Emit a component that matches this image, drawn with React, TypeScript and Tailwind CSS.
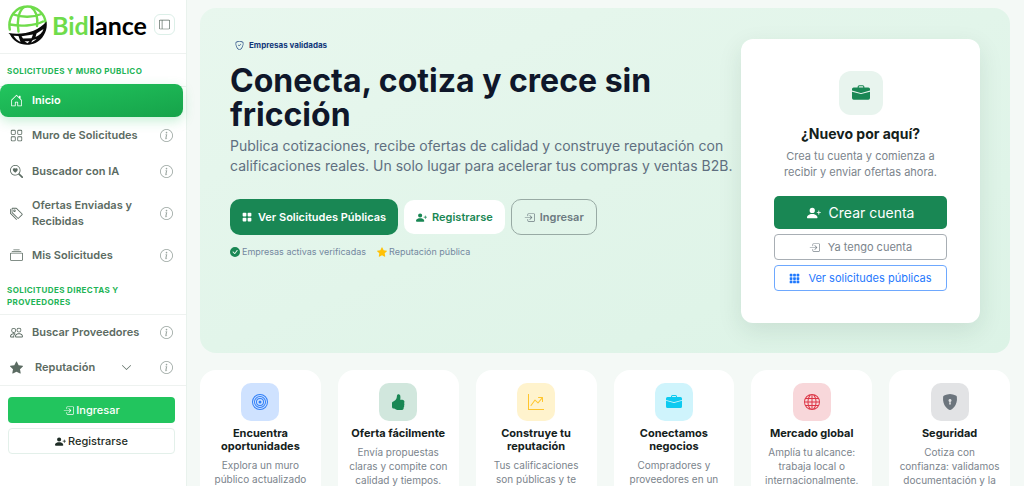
import React from "react";
import type { IconType } from "react-icons";
import {
  BsBoxArrowInRight,
  BsBriefcaseFill,
  BsBullseye,
  BsCheckCircleFill,
  BsChevronDown,
  BsCollection,
  BsGlobe,
  BsGraphUpArrow,
  BsGrid,
  BsGrid3X3GapFill,
  BsGridFill,
  BsHandThumbsUpFill,
  BsHouseDoor,
  BsInfoCircle,
  BsLayoutSidebar,
  BsPeople,
  BsPersonPlusFill,
  BsSearchHeart,
  BsShieldCheck,
  BsShieldLockFill,
  BsStarFill,
  BsTags,
} from "react-icons/bs";

const Logo = () => {
  return (
    <a href="#" className="flex items-center gap-1" aria-label="Bidlance">
      <svg viewBox="0 0 40 40" className="w-10 h-10 shrink-0" fill="none">
        <g stroke="#6fdc4b" strokeWidth="2.4" strokeLinecap="round">
          <path d="M1.8 24.5C-0.5 12 8 1.5 19.5 1.5C29 1.5 36.5 8.5 37.5 17" />
          <path d="M10.5 26.5C8.5 17 10.5 6 16 2" />
          <path d="M23 2C28 5.5 30 13 29 21" />
          <path d="M5.5 9.5C13.5 12.5 25.5 12.5 33.5 9" />
          <path d="M2 19.5C12 21.5 26 21 35 16.5" />
        </g>
        <path
          d="M0.5 28C15 30.5 30 26.5 38.5 16.5C40 25 35.5 34 27.5 38C17 42.5 6 38 2 29.5Z"
          fill="#0a0a0a"
        />
        <g fill="#ffffff">
          <path d="M5.5 30.7C7.5 33.5 9.5 35.5 12.5 37L10.5 31Z" />
          <path d="M13.5 31.2L25 29.5L23.5 33.2L15 33.6Z" />
          <path d="M28.5 28.5L35.5 24C34.5 27.5 31.5 30.5 27.5 32Z" />
          <path d="M16.5 36.2H21.5L19.5 38.2Z" />
          <path d="M28.5 34C26.5 35.7 25 36.8 23 37.5L24.8 35Z" />
        </g>
      </svg>
      <span className="font-[Lato,sans-serif] text-[25px] leading-8 font-bold text-black">
        <span className="text-[#6fdc4b]">Bid</span>lance
      </span>
    </a>
  );
};

const SidebarItem = ({
  icon: Icon,
  label,
  expandable = false,
}: {
  icon: IconType;
  label: string;
  expandable?: boolean;
}) => {
  return (
    <li className="flex items-center gap-2 min-h-8 py-[6px] pl-[10px] pr-[13px]">
      <a
        href="#"
        className="flex flex-1 items-center gap-[9px] text-[11px] leading-4 font-semibold text-[#5b6b62]"
      >
        <Icon className="w-[13px] h-[13px] shrink-0" />
        <span className={expandable ? "flex-1 pl-[3px]" : "flex-1"}>{label}</span>
        {expandable && <BsChevronDown className="w-[11px] h-[11px] mr-5" />}
      </a>
      <button type="button" aria-label={`Información: ${label}`}>
        <BsInfoCircle className="w-[13px] h-[13px] text-[#9aa5a0]" />
      </button>
    </li>
  );
};

const Sidebar = () => {
  return (
    <aside className="w-[187px] shrink-0 bg-white border-r border-[#e9f2ed]">
      <div className="flex items-center justify-between h-[54px] pl-2 pr-[11px] pb-1 border-b border-[#eef2f0]">
        <Logo />
        <button
          type="button"
          aria-label="Contraer menú"
          className="flex items-center justify-center w-[21px] h-[21px] rounded-md border border-[#dcefe8]"
        >
          <BsLayoutSidebar className="w-[11px] h-[11px] text-[#5b6b62]" />
        </button>
      </div>
      <h2 className="px-[7px] pt-[11px] pb-[9px] text-[8px] leading-3 font-bold tracking-wider text-[#22b455] uppercase border-b border-[#eef2f0]">
        Solicitudes y muro publico
      </h2>
      <nav>
        <a
          href="#"
          className="flex items-center gap-[9px] h-[33px] mt-[-3px] mr-[3px] pl-[10px] rounded-lg bg-linear-to-br from-[#22c55e] to-[#16a34a] text-[11px] font-semibold text-white shadow-[0_4px_12px_rgba(34,197,94,0.25)]"
        >
          <BsHouseDoor className="w-[13px] h-[13px]" />
          Inicio
        </a>
        <ul className="pt-[2px] space-y-1">
          <SidebarItem icon={BsGrid} label="Muro de Solicitudes" />
          <SidebarItem icon={BsSearchHeart} label="Buscador con IA" />
          <SidebarItem icon={BsTags} label="Ofertas Enviadas y Recibidas" />
          <SidebarItem icon={BsCollection} label="Mis Solicitudes" />
        </ul>
      </nav>
      <h2 className="px-[7px] pt-[13px] pb-[6px] text-[8px] leading-3 font-bold tracking-wider text-[#22b455] uppercase border-b border-[#eef2f0]">
        Solicitudes directas y proveedores
      </h2>
      <ul className="pt-px pb-[2px] space-y-[3px] border-b border-[#eef2f0]">
        <SidebarItem icon={BsPeople} label="Buscar Proveedores" />
        <SidebarItem icon={BsStarFill} label="Reputación" expandable />
      </ul>
      <div className="flex flex-col gap-[5px] pt-[11px] pl-2 pr-[11px] text-[11px] font-medium">
        <button
          type="button"
          className="flex items-center justify-center gap-[2px] h-[26px] rounded-sm bg-[#22c55e] text-white"
        >
          <BsBoxArrowInRight className="w-[11px] h-[11px]" />
          Ingresar
        </button>
        <button
          type="button"
          className="flex items-center justify-center gap-[2px] h-[26px] rounded-sm border border-[#e3f0ea] text-[#1f2d26]"
        >
          <BsPersonPlusFill className="w-[11px] h-[11px]" />
          Registrarse
        </button>
      </div>
    </aside>
  );
};

const SignupCard = () => {
  return (
    <div className="w-[239px] shrink-0 rounded-xl bg-white px-[33px] pt-8 pb-8 text-center shadow-[0_8px_24px_rgba(20,60,40,0.1)]">
      <div className="flex items-center justify-center w-11 h-11 mx-auto rounded-xl bg-[#e8f4ee]">
        <BsBriefcaseFill className="w-[18px] h-[18px] text-[#198754]" />
      </div>
      <h2 className="mt-[9px] text-[14px] leading-5 font-bold text-[#14211b]">
        ¿Nuevo por aquí?
      </h2>
      <p className="mt-1 text-[11px] leading-4 text-[#7b848c]">
        Crea tu cuenta y comienza a recibir y enviar ofertas ahora.
      </p>
      <div className="flex flex-col gap-[5px] mt-4 text-[11px]">
        <button
          type="button"
          className="flex items-center justify-center gap-2 h-[33px] rounded-[5px] bg-[#198754] text-[14px] text-white"
        >
          <BsPersonPlusFill className="w-[14px] h-[14px]" />
          Crear cuenta
        </button>
        <button
          type="button"
          className="flex items-center justify-center gap-2 h-[26px] rounded-sm border border-[#a8aeb4] text-[#7b848c]"
        >
          <BsBoxArrowInRight className="w-[11px] h-[11px]" />
          Ya tengo cuenta
        </button>
        <button
          type="button"
          className="flex items-center justify-center gap-2 h-[26px] rounded-sm border border-[#6ea8fe] text-[#1f78fd]"
        >
          <BsGrid3X3GapFill className="w-[11px] h-[11px]" />
          Ver solicitudes públicas
        </button>
      </div>
    </div>
  );
};

const Hero = () => {
  return (
    <section className="flex items-start justify-between rounded-2xl bg-linear-to-br from-[#e8f7ee] to-[#dcf3e6] pt-[31px] pb-[30px] px-[30px]">
      <div className="flex-1 min-w-0 pr-1">
        <p className="flex items-center gap-[5px] pl-[5px] text-[8px] leading-3 font-bold text-[#12387a]">
          <BsShieldCheck className="w-[9px] h-[9px]" />
          Empresas validadas
        </p>
        <h1 className="mt-[13px] text-[32px] leading-[34px] font-bold text-[#0f172a]">
          Conecta, cotiza y crece sin fricción
        </h1>
        <p className="mt-1 text-[14px] leading-5 text-[#5f6f80]">
          Publica cotizaciones, recibe ofertas de calidad y construye reputación
          con calificaciones reales. Un solo lugar para acelerar tus compras y
          ventas B2B.
        </p>
        <div className="flex items-center gap-[6px] mt-[23px] text-[11px] font-semibold">
          <button
            type="button"
            className="flex items-center gap-[6px] h-9 px-3 rounded-[10px] bg-[#198754] text-white"
          >
            <BsGridFill className="w-[10px] h-[10px]" />
            Ver Solicitudes Públicas
          </button>
          <button
            type="button"
            className="flex items-center gap-[5px] h-[34px] px-3 rounded-[10px] bg-white text-[#198754]"
          >
            <BsPersonPlusFill className="w-[11px] h-[11px]" />
            Registrarse
          </button>
          <button
            type="button"
            className="flex items-center gap-[5px] h-9 px-3 rounded-[10px] border border-[#98aaa4] text-[#6c7a80]"
          >
            <BsBoxArrowInRight className="w-[11px] h-[11px]" />
            Ingresar
          </button>
        </div>
        <div className="flex gap-[11px] mt-[11px] text-[9px] leading-3 text-[#7488a0]">
          <span className="flex items-center gap-[2px]">
            <BsCheckCircleFill className="w-[10px] h-[10px] text-[#198754]" />
            Empresas activas verificadas
          </span>
          <span className="flex items-center gap-[2px]">
            <BsStarFill className="w-[10px] h-[10px] text-[#ffc107]" />
            Reputación pública
          </span>
        </div>
      </div>
      <SignupCard />
    </section>
  );
};

const features = [
  {
    icon: BsBullseye,
    color: "bg-[#cfe2ff] text-[#2f7ff8]",
    title: "Encuentra oportunidades",
    text: "Explora un muro público actualizado",
  },
  {
    icon: BsHandThumbsUpFill,
    color: "bg-[#d1e7dd] text-[#198754]",
    title: "Oferta fácilmente",
    text: "Envía propuestas claras y compite con calidad y tiempos.",
  },
  {
    icon: BsGraphUpArrow,
    color: "bg-[#fff3cd] text-[#ffc52c]",
    title: "Construye tu reputación",
    text: "Tus calificaciones son públicas y te",
  },
  {
    icon: BsBriefcaseFill,
    color: "bg-[#cff4fc] text-[#0dcaf0]",
    title: "Conectamos negocios",
    text: "Compradores y proveedores en un",
  },
  {
    icon: BsGlobe,
    color: "bg-[#f8d7da] text-[#dc3545]",
    title: "Mercado global",
    text: "Amplía tu alcance: trabaja local o internacionalmente.",
  },
  {
    icon: BsShieldLockFill,
    color: "bg-[#e2e3e5] text-[#6c757d]",
    title: "Seguridad",
    text: "Cotiza con confianza: validamos documentación y la",
  },
];

const Features = () => {
  return (
    <section className="grid grid-cols-6 gap-[17px] mt-[17px]">
      {features.map(({ icon: Icon, color, title, text }) => (
        <div
          key={title}
          className="rounded-2xl bg-white px-[10px] pt-[13px] pb-8 text-center"
        >
          <div
            className={`flex items-center justify-center w-[38px] h-[38px] mx-auto rounded-[10px] ${color}`}
          >
            <Icon className="w-4 h-4" />
          </div>
          <h3 className="mt-[6px] text-[11px] leading-[13px] font-bold text-[#14211b]">
            {title}
          </h3>
          <p className="mt-[5px] text-[10px] leading-[14px] text-[#7b848c]">
            {text}
          </p>
        </div>
      ))}
    </section>
  );
};

const App = () => {
  return (
    <div className="flex h-screen overflow-hidden bg-[#f4f9f6] font-[Inter,sans-serif]">
      <Sidebar />
      <main className="flex-1 min-w-0 pt-2 pl-[13px] pr-[14px]">
        <Hero />
        <Features />
      </main>
    </div>
  );
};

export default App;
